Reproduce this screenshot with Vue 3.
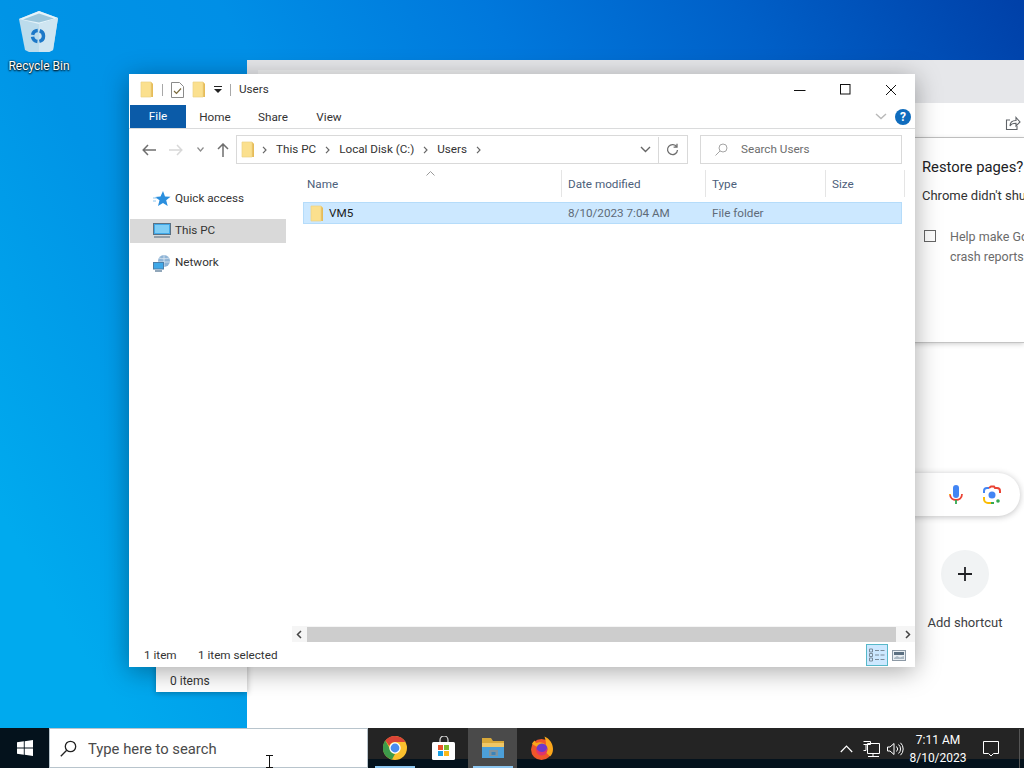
<script setup>
const navItems = [
  { label: "Quick access", icon: "star" },
  { label: "This PC", icon: "pc", active: true },
  { label: "Network", icon: "net" },
];
const crumbs = ["This PC", "Local Disk (C:)", "Users"];
const columns = [
  { label: "Name", width: 259 },
  { label: "Date modified", width: 144 },
  { label: "Type", width: 120 },
  { label: "Size", width: 79 },
];
</script>

<template>
  <main class="desktop">
    <svg class="defs" width="0" height="0">
      <symbol id="folder" viewBox="0 0 14 17">
        <path d="M1 1h10l2 2v13H1z" fill="#fbe08e" />
        <path d="M11 1l2 2v13h-2z" fill="#e6bc58" />
        <path d="M1 1h10v15H1z" fill="none" stroke="#ecd184" stroke-width=".7" />
      </symbol>
    </svg>

    <div class="recycle">
      <svg width="42" height="44" viewBox="0 0 42 44">
        <path d="M1 10L21 2l19 7-5 32-4 2H11l-4-2z" fill="#bcdcec" />
        <path d="M1 10L21 2l19 7-19 6z" fill="#e4f3fa" />
        <path d="M5 10.500l16-6 15 5-15 4z" fill="#9cc6db" />
        <path d="M21 43V15l19-6-5 32-4 2z" fill="#cfe5f1" />
        <circle cx="20" cy="27" r="5.500" fill="none" stroke="#1c78c8" stroke-width="3.500" stroke-dasharray="7 2" />
      </svg>
      <span>Recycle Bin</span>
    </div>

    <!-- chrome window behind -->
    <section class="chrome">
      <div class="chrome-tabs"><div class="chrome-tab"></div></div>
      <div class="chrome-bar">
        <svg width="16" height="16" viewBox="0 0 16 16" fill="none" stroke="#5f6368" stroke-width="1.1">
          <path d="M5 5H1.500v9.500H12V11" />
          <path d="M5 11c0-4 3-5.500 6-5.500V2.500l4 4.500-4 4V8.200c-3 0-5 .8-6 2.800z" />
        </svg>
      </div>
      <div class="restore">
        <h2>Restore pages?</h2>
        <p class="restore-sub">Chrome didn't shut down correctly.</p>
        <div class="restore-check">
          <span class="box"></span>
          <p>Help make Google Chrome better by sending<br />crash reports and usage statistics</p>
        </div>
      </div>
      <div class="ntp">
        <div class="pill">
          <svg width="16" height="22" viewBox="0 0 16 22">
            <rect x="5" y="1" width="6" height="13" rx="3" fill="#4285f4" />
            <path d="M2 10c0 4 3 6 6 6s6-2 6-6" fill="none" stroke="#ea4335" stroke-width="1.800" />
            <path d="M8 16v4" stroke="#34a853" stroke-width="1.800" />
            <path d="M2 10v1" stroke="#fbbc04" stroke-width="1.800" />
          </svg>
          <svg width="20" height="20" viewBox="0 0 20 20" fill="none" stroke-width="2">
            <path d="M2 8V6a3 3 0 0 1 3-3h2" stroke="#4285f4" />
            <path d="M7 3l2-1.500h3L13 3h2a3 3 0 0 1 3 3v2" stroke="#ea4335" />
            <path d="M2 12v2a4 4 0 0 0 4 4h3" stroke="#fbbc04" />
            <path d="M9 18h3" stroke="#34a853" />
            <circle cx="10" cy="10" r="3.500" fill="#4285f4" stroke="none" />
            <circle cx="16" cy="16" r="1.800" fill="#34a853" stroke="none" />
          </svg>
        </div>
        <div class="shortcut">
          <div class="plus">
            <svg width="14" height="14" viewBox="0 0 14 14"><path d="M7 0v14M0 7h14" stroke="#202124" stroke-width="1.800" /></svg>
          </div>
          <span>Add shortcut</span>
        </div>
      </div>
    </section>

    <!-- sliver of another explorer window -->
    <div class="back-explorer"><span>0 items</span></div>

    <section class="explorer">
      <header class="titlebar">
        <div class="qat">
          <svg class="fold" width="14" height="17"><use href="#folder" /></svg>
          <i class="vsep"></i>
          <svg width="13" height="16" viewBox="0 0 13 16" fill="none">
            <path d="M.5.500h8l4 4v11H.5z" fill="#fff" stroke="#8a8a8a" />
            <path d="M3 9l2.500 2.500L10 6.500" stroke="#7b6a3c" stroke-width="1.200" />
          </svg>
          <svg class="fold" width="14" height="17"><use href="#folder" /></svg>
          <svg width="8" height="7" viewBox="0 0 8 7"><path d="M0 0h8v1H0z M0 3h8L4 7z" fill="#222" /></svg>
          <i class="vsep"></i>
          <span class="win-title">Users</span>
        </div>
        <div class="win-btns">
          <svg width="12" height="12" viewBox="0 0 12 12"><path d="M0 6.500h11.500" stroke="#111" /></svg>
          <svg width="12" height="12" viewBox="0 0 12 12"><rect x=".5" y=".5" width="9.500" height="9.500" fill="none" stroke="#111" /></svg>
          <svg class="win-close" width="12" height="12" viewBox="0 0 12 12"><path d="M1 1l10 10M11 1L1 11" stroke="#111" /></svg>
        </div>
      </header>

      <nav class="ribbon">
        <a class="file-tab">File</a>
        <a>Home</a>
        <a>Share</a>
        <a>View</a>
        <div class="ribbon-right">
          <svg width="12" height="7" viewBox="0 0 12 7" fill="none"><path d="M1 1l5 4.500L11 1" stroke="#b9b9b9" stroke-width="1.400" /></svg>
          <span class="help">?</span>
        </div>
      </nav>

      <div class="addr-row">
        <div class="arrows">
          <svg width="14" height="12" viewBox="0 0 14 12" fill="none"><path d="M6 1L1.200 6 6 11M1.500 6H14" stroke="#6f6f6f" stroke-width="1.500" /></svg>
          <svg width="14" height="12" viewBox="0 0 14 12" fill="none"><path d="M8 1l4.800 5L8 11M12.500 6H0" stroke="#d8d8d8" stroke-width="1.500" /></svg>
          <svg width="7" height="5" viewBox="0 0 7 5" fill="none"><path d="M.5.500L3.500 4l3-3.500" stroke="#8c8c8c" stroke-width="1.200" /></svg>
          <svg width="12" height="14" viewBox="0 0 12 14" fill="none"><path d="M1 6l5-5 5 5M6 1.500V14" stroke="#6f6f6f" stroke-width="1.500" /></svg>
        </div>
        <div class="addr">
          <svg class="fold addr-fold" width="14" height="17"><use href="#folder" /></svg>
          <template v-for="c in crumbs" :key="c">
            <svg width="5" height="8" viewBox="0 0 5 8" fill="none"><path d="M1 .8L4 4 1 7.200" stroke="#666" stroke-width="1.200" /></svg>
            <span class="crumb">{{ c }}</span>
          </template>
          <svg width="5" height="8" viewBox="0 0 5 8" fill="none"><path d="M1 .8L4 4 1 7.200" stroke="#666" stroke-width="1.200" /></svg>
          <div class="addr-end">
            <svg width="11" height="7" viewBox="0 0 11 7" fill="none"><path d="M1 1l4.500 4.500L10 1" stroke="#666" stroke-width="1.400" /></svg>
            <i class="vsep tall"></i>
            <svg width="13" height="13" viewBox="0 0 13 13" fill="none"><path d="M10.800 4A5 5 0 1 0 11.500 7M11 .8V4.200H7.600" stroke="#6e6e6e" stroke-width="1.300" /></svg>
          </div>
        </div>
        <div class="search">
          <svg width="13" height="13" viewBox="0 0 13 13" fill="none"><circle cx="8" cy="5" r="4" stroke="#a5a5a5" /><path d="M5 8l-4.500 4.500" stroke="#a5a5a5" /></svg>
          <span class="crumb">Search Users</span>
        </div>
      </div>

      <div class="body">
        <aside class="nav">
          <div v-for="n in navItems" :key="n.label" class="nav-row" :class="{ active: n.active }">
            <svg v-if="n.icon === 'star'" width="18" height="18" viewBox="0 0 18 18">
              <path d="M10 1l2 5.500 5.500.3-4.300 3.500 1.500 5.700L10 13l-5 3 1.500-5.700L2 7l5.500-.5z" fill="#2b8fde" />
              <path d="M0 8h4M0 11h3" stroke="#8fc6ef" />
            </svg>
            <svg v-else-if="n.icon === 'pc'" width="18" height="16" viewBox="0 0 18 16">
              <rect x=".5" y=".5" width="17" height="11" fill="#3fa8e8" stroke="#5c7183" />
              <rect x="2" y="2" width="14" height="8" fill="#7fcdf5" />
              <path d="M1 14h16" stroke="#7b8b98" stroke-width="1.500" />
            </svg>
            <svg v-else width="18" height="18" viewBox="0 0 18 18">
              <circle cx="11" cy="7" r="6" fill="#8fb4d6" />
              <path d="M6 4c3 1 7 1 10 0M5 8h12M11 1v12" stroke="#e8f1f8" stroke-width=".7" fill="none" />
              <rect x=".5" y="8.500" width="10" height="6.500" fill="#3fa8e8" stroke="#4c7ea8" />
              <path d="M2 17h7" stroke="#6d8aa3" stroke-width="1.500" />
            </svg>
            <span class="crumb">{{ n.label }}</span>
          </div>
        </aside>

        <div class="files">
          <div class="list-head">
            <svg class="sort" width="9" height="5" viewBox="0 0 9 5" fill="none"><path d="M.5 4.500l4-4 4 4" stroke="#9a9a9a" /></svg>
            <div v-for="col in columns" :key="col.label" class="col" :style="{ width: col.width + 'px' }">{{ col.label }}</div>
          </div>
          <div class="row">
            <div class="cell-name">
              <svg class="fold" width="14" height="17"><use href="#folder" /></svg>
              <span>VM5</span>
            </div>
            <div class="cell-date">8/10/2023 7:04 AM</div>
            <div class="cell-type">File folder</div>
          </div>
          <div class="hscroll">
            <svg width="6" height="9" viewBox="0 0 6 9" fill="none"><path d="M5 1L1.500 4.500 5 8" stroke="#444" stroke-width="1.500" /></svg>
            <div class="thumb"></div>
            <svg width="6" height="9" viewBox="0 0 6 9" fill="none"><path d="M1 1l3.500 3.500L1 8" stroke="#444" stroke-width="1.500" /></svg>
          </div>
        </div>
      </div>

      <footer class="status">
        <span class="count">1 item</span>
        <span>1 item selected</span>
        <div class="views">
          <div class="view-btn on">
            <svg width="16" height="14" viewBox="0 0 16 14" fill="none" stroke="#7a8a99">
              <path d="M.5 1h3v3h-3zM.5 5.500h3v3h-3zM.5 10h3v3h-3zM6 2.500h4M11.500 2.500h4M6 7h4M11.500 7h4M6 11.500h4M11.500 11.500h4" />
            </svg>
          </div>
          <div class="view-btn">
            <svg width="14" height="11" viewBox="0 0 14 11">
              <rect x=".5" y=".5" width="13" height="10" fill="#e9eef2" stroke="#8c99a5" />
              <rect x="2" y="2" width="10" height="3" fill="#5b6f80" />
              <path d="M2 8l3-2 3 1.500L12 6v3H2z" fill="#aab8c3" />
            </svg>
          </div>
        </div>
      </footer>
    </section>

    <footer class="taskbar">
      <div class="start">
        <svg width="16" height="16" viewBox="0 0 16 16" fill="#fff">
          <path d="M0 2.300l6.800-1V7.500H0zM7.700 1.200L16 0v7.500H7.700zM0 8.400h6.800v6.300L0 13.700zM7.700 8.400H16V16l-8.300-1.200z" />
        </svg>
      </div>
      <div class="task-search">
        <svg width="17" height="17" viewBox="0 0 17 17" fill="none" stroke="#222" stroke-width="1.300">
          <circle cx="10.500" cy="6.500" r="5.200" /><path d="M6.700 10.300L.8 16.200" />
        </svg>
        <span>Type here to search</span>
      </div>
      <div class="apps">
        <div class="app running">
          <svg width="24" height="24" viewBox="0 0 24 24">
            <circle cx="12" cy="12" r="12" fill="#fbc02d" />
            <path d="M12 0a12 12 0 0 1 10.400 6H12a6 6 0 0 0-5.700 4L2.300 4.600A12 12 0 0 1 12 0z" fill="#db4437" />
            <path d="M2.300 4.600L7.100 13a6 6 0 0 0 4.900 5l-3 5.600A12 12 0 0 1 2.300 4.600z" fill="#3d9b4a" />
            <circle cx="12" cy="12" r="5.700" fill="#fff" /><circle cx="12" cy="12" r="4.400" fill="#4a8cf0" />
          </svg>
        </div>
        <div class="app">
          <svg width="24" height="24" viewBox="0 1 24 24">
            <path d="M8 8V5a4 4 0 0 1 8 0v3" fill="none" stroke="#ddd" stroke-width="1.200" />
            <rect y="7" width="23" height="18" rx="1.500" fill="#fff" />
            <rect x="6" y="10" width="5" height="5" fill="#e8532b" /><rect x="12" y="10" width="5" height="5" fill="#7fba2a" />
            <rect x="6" y="16" width="5" height="5" fill="#19a1e6" /><rect x="12" y="16" width="5" height="5" fill="#fbb91a" />
          </svg>
        </div>
        <div class="app running active">
          <svg width="24" height="22" viewBox="0 0 24 22">
            <path d="M1 1h9l2 3h11v17H1z" fill="#d8a83a" />
            <path d="M1 6h22v15H1z" fill="#efc766" />
            <path d="M1 10h22v11H1z" fill="#4c9fd8" />
            <rect x="8" y="13" width="9" height="6" fill="#7f93a0" /><rect x="10.500" y="15" width="4" height="3" fill="#3c83b8" />
          </svg>
        </div>
        <div class="app">
          <svg width="24" height="24" viewBox="0 0 24 24">
            <circle cx="11.500" cy="13.500" r="10.500" fill="#f0562a" />
            <path d="M2 8c.5-1.500 1.500-2.500 3-3.500 0 1.500.5 2 1.500 2.500 3-1.500 7.500-.5 9.500 2.500 0-3.500-.5-6-1.500-9 5 2 8.500 7 8.500 12.500 0 3-1 5.500-3 7.500l-5-5z" fill="#fba61b" />
            <circle cx="12" cy="13" r="5.500" fill="#6e39c9" />
            <path d="M6.500 12c1 2.500 3 4 5.500 4s4-1.500 5-4c1 4-2 7.500-5.500 7.500S5.500 16 6.500 12z" fill="#e0356c" />
          </svg>
        </div>
      </div>
      <div class="tray">
        <svg class="t-chev" width="13" height="8" viewBox="0 0 13 8" fill="none"><path d="M.8 7L6.500 1.200 12.200 7" stroke="#fff" stroke-width="1.200" /></svg>
        <svg class="t-net" width="17" height="16" viewBox="0 0 17 16" fill="none" stroke="#fff">
          <path d="M4.500 2.500h12v10h-12zM.5.500h7v3h-7M3 3.500v6H.5M10 12.500v3M5 15.500h11" />
        </svg>
        <svg class="t-vol" width="17" height="14" viewBox="0 0 17 14" fill="none" stroke="#fff">
          <path d="M.5 5v4h2.500L7 12.500v-11L3 5zM9.500 4.500a3.500 3.500 0 0 1 0 5M11.500 2.500a6 6 0 0 1 0 9M13.500.8a8.500 8.500 0 0 1 0 12.400" />
        </svg>
        <div class="clock"><span>7:11 AM</span><span>8/10/2023</span></div>
        <svg class="notif" width="16" height="16" viewBox="0 0 16 16" fill="none" stroke="#fff"><path d="M.5.500h15v12h-5L8 15l-2.500-2.500h-5z" /></svg>
        <i class="show-desktop"></i>
      </div>
    </footer>

    <svg class="ibeam" width="7" height="13" viewBox="0 0 7 13" fill="none"><path d="M0 .5h7M3.500.5V12.500M0 12.500h7" stroke="#111" /></svg>
  </main>
</template>

<style scoped>
.desktop {
  position: relative;
  width: 1024px;
  height: 768px;
  overflow: hidden;
  font-family: Roboto, "Open Sans", sans-serif;
  font-size: 12px;
  color: #333;
  background: linear-gradient(60deg, #00aaee 10%, #0094e6 30%, #008fe6 45%, #0078dc 63%, #0060c8 80%, #0040a8 100%);
}

.defs {
  position: absolute;
}

.recycle {
  position: absolute;
  left: 0;
  top: 9px;
  width: 78px;
  display: flex;
  flex-direction: column;
  align-items: center;
  gap: 6px;
  color: #fff;
  text-shadow: 0 1px 2px #000, 0 0 2px #000;
}

.chrome {
  position: absolute;
  left: 247px;
  top: 60px;
  width: 777px;
  height: 668px;
  display: flex;
  flex-direction: column;
  background: #fff;
}

.chrome-tabs {
  height: 43px;
  box-sizing: border-box;
  background: #e6e7ea;
  padding: 10px 0 0 11px;
}

.chrome-tab {
  width: 232px;
  height: 33px;
  background: #f0f1f2;
}

.chrome-bar {
  height: 35px;
  box-sizing: border-box;
  display: flex;
  justify-content: flex-end;
  align-items: center;
  padding: 6px 3px 0 0;
  background: #fff;
  border-bottom: 1px solid #c9c9c9;
}

.restore {
  height: 205px;
  box-sizing: border-box;
  padding: 19px 0 0 675px;
  white-space: nowrap;
  border-bottom: 1px solid #c4c4c4;
  box-shadow: 0 1px 5px rgba(0, 0, 0, 0.2);
  overflow: hidden;
}

.restore h2 {
  margin: 0;
  font-size: 14.8px;
  font-weight: 400;
  line-height: 20px;
  color: #202124;
}

.restore-sub {
  margin: 11px 0 0;
  font-size: 13px;
  color: #333;
}

.restore-check {
  display: flex;
  gap: 14px;
  margin-top: 24px;
  margin-left: 2px;
}

.restore-check p {
  margin: 0;
  font-size: 12.5px;
  line-height: 20px;
  color: #6b6b6b;
}

.box {
  flex: none;
  width: 10px;
  height: 10px;
  margin-top: 3px;
  border: 1px solid #666;
}

.ntp {
  flex: 1;
  display: flex;
  flex-direction: column;
  align-items: flex-end;
  padding-top: 130px;
}

.pill {
  width: 200px;
  height: 43px;
  box-sizing: border-box;
  margin-right: 4px;
  padding-right: 18px;
  display: flex;
  justify-content: flex-end;
  align-items: center;
  gap: 18px;
  background: #fff;
  border-radius: 0 22px 22px 0;
  box-shadow: 0 1px 6px rgba(32, 33, 36, 0.28);
}

.shortcut {
  width: 118px;
  margin-top: 34px;
  display: flex;
  flex-direction: column;
  align-items: center;
  gap: 17px;
  font-size: 13px;
  color: #3c4043;
}

.plus {
  width: 48px;
  height: 48px;
  border-radius: 50%;
  background: #f1f3f4;
  display: flex;
  align-items: center;
  justify-content: center;
}

.back-explorer {
  position: absolute;
  left: 156px;
  top: 660px;
  width: 91px;
  height: 32px;
  box-sizing: border-box;
  padding: 14px 0 0 14px;
  background: #fff;
  box-shadow: 0 1px 6px rgba(0, 0, 0, 0.3);
}

.explorer {
  position: absolute;
  left: 129px;
  top: 74px;
  width: 786px;
  height: 593px;
  display: flex;
  flex-direction: column;
  font-size: 11.7px;
  background: #fff;
  box-shadow: 0 4px 24px rgba(0, 0, 0, 0.35);
}

.titlebar {
  height: 31px;
  flex: none;
  display: flex;
  justify-content: space-between;
  align-items: center;
  padding: 0 18px 0 11px;
}

.qat {
  display: flex;
  align-items: center;
  gap: 8px;
}

.win-title {
  margin-bottom: 2px;
}

.vsep {
  width: 1px;
  height: 12px;
  background: #a8a8a8;
}

.vsep.tall {
  height: 26px;
  background: #d9d9d9;
}

.win-btns {
  display: flex;
  gap: 34px;
}

.win-close {
  margin-left: -1px;
}

.ribbon {
  height: 23px;
  flex: none;
  display: flex;
  align-items: center;
  padding-right: 4px;
  border-bottom: 1px solid #dadbdc;
}

.ribbon a {
  width: 58px;
  text-align: center;
  color: #333;
}

.ribbon a:last-of-type {
  width: 54px;
}

.ribbon .file-tab {
  width: 56px;
  height: 23px;
  line-height: 23px;
  margin-left: 1px;
  background: #0b5ba8;
  color: #fff;
}

.ribbon-right {
  margin-left: auto;
  display: flex;
  align-items: center;
  gap: 8px;
}

.help {
  width: 16px;
  height: 16px;
  border-radius: 50%;
  background: #0f6cbd;
  color: #fff;
  font-weight: 700;
  font-size: 12px;
  line-height: 16px;
  text-align: center;
}

.addr-row {
  height: 41px;
  flex: none;
  display: flex;
  align-items: center;
  padding-left: 13px;
}

.arrows {
  width: 94px;
  display: flex;
  align-items: center;
  justify-content: space-between;
  padding-right: 7px;
  box-sizing: border-box;
}

.addr {
  width: 452px;
  height: 29px;
  box-sizing: border-box;
  display: flex;
  align-items: center;
  gap: 9px;
  padding-left: 4px;
  border: 1px solid #d9d9d9;
}

.crumb {
  margin-bottom: 2px;
}

.addr-fold {
  margin-right: -2px;
}

.addr-end {
  margin-left: auto;
  display: flex;
  align-items: center;
  gap: 7px;
  padding-right: 8px;
}

.search {
  width: 202px;
  height: 29px;
  box-sizing: border-box;
  margin-left: 12px;
  display: flex;
  align-items: center;
  gap: 13px;
  padding-left: 14px;
  border: 1px solid #d9d9d9;
  color: #6d6d6d;
}

.body {
  flex: 1;
  min-height: 0;
  display: flex;
}

.nav {
  width: 161px;
  flex: none;
  padding-top: 17px;
  display: flex;
  flex-direction: column;
  gap: 8px;
}

.nav-row {
  width: 156px;
  height: 24px;
  margin-left: 1px;
  display: flex;
  align-items: center;
  gap: 4px;
  padding-left: 23px;
  box-sizing: border-box;
}

.nav-row.active {
  background: #d9d9d9;
}

.files {
  flex: 1;
  min-width: 0;
  position: relative;
  display: flex;
  flex-direction: column;
  padding-left: 13px;
}

.list-head {
  height: 27px;
  display: flex;
  color: #4c607a;
}

.sort {
  position: absolute;
  left: 136px;
  top: 1px;
}

.col {
  box-sizing: border-box;
  padding: 7px 0 0 6px;
  border-right: 1px solid #e5e5e5;
  flex: none;
}

.col:first-of-type {
  padding-left: 4px;
}

.row {
  width: 599px;
  height: 22px;
  margin-top: 5px;
  box-sizing: border-box;
  display: flex;
  align-items: center;
  background: #cce8ff;
  border: 1px solid #b5dcfa;
}

.cell-name {
  width: 264px;
  display: flex;
  align-items: center;
  gap: 5px;
  padding-left: 6px;
  box-sizing: border-box;
  color: #1a1a1a;
}

.cell-date {
  width: 144px;
  color: #5f6b78;
}

.cell-type {
  color: #5f6b78;
}

.hscroll {
  margin-top: auto;
  margin-bottom: 1px;
  margin-left: -11px;
  height: 16px;
  display: flex;
  align-items: center;
  gap: 5px;
  padding: 0 4px;
  background: #f5f5f5;
}

.thumb {
  flex: 1;
  height: 15px;
  margin-right: 4px;
  background: #cdcdcd;
}

.status {
  height: 24px;
  flex: none;
  box-sizing: border-box;
  display: flex;
  align-items: center;
  padding: 0 5px 0 15px;
}

.count {
  width: 54px;
}

.views {
  margin-left: auto;
  display: flex;
  align-items: center;
}

.view-btn {
  width: 22px;
  height: 22px;
  display: flex;
  align-items: center;
  justify-content: center;
  box-sizing: border-box;
}

.view-btn.on {
  background: #cce8ff;
  border: 1px solid #57b8c9;
}

.taskbar {
  position: absolute;
  left: 0;
  right: 0;
  bottom: 0;
  height: 40px;
  display: flex;
  background: linear-gradient(180deg, #242424 0, #242424 78%, #04121c 78%);
}

.start {
  width: 49px;
  display: flex;
  align-items: center;
  justify-content: center;
  background: #04121c;
}

.task-search {
  width: 319px;
  box-sizing: border-box;
  display: flex;
  align-items: center;
  gap: 11px;
  padding: 1px 0 0 10px;
  background: #fff;
  border: 1px solid #b8c4cc;
  font-size: 14.8px;
  color: #4a4a4a;
}

.apps {
  display: flex;
  margin-left: 2px;
}

.app {
  position: relative;
  width: 49px;
  display: flex;
  align-items: center;
  justify-content: center;
}

.app.running::after {
  content: "";
  position: absolute;
  left: 5px;
  right: 4px;
  bottom: 0;
  height: 2px;
  background: #8cc6f0;
}

.app.active {
  background: #4a4a4a;
}

.tray {
  margin-left: auto;
  display: flex;
  align-items: center;
  color: #fff;
  padding-top: 1px;
}

.t-net {
  margin-left: 10px;
}

.t-vol {
  margin-left: 7px;
}

.clock {
  width: 60px;
  margin-left: 4px;
  display: flex;
  flex-direction: column;
  align-items: center;
  line-height: 18px;
}

.notif {
  margin: 0 20px 0 15px;
}

.show-desktop {
  width: 1px;
  align-self: stretch;
  background: #555;
  margin-right: 4px;
}

.ibeam {
  position: absolute;
  left: 266px;
  top: 755px;
}
</style>

<style>
html,
body {
  margin: 0;
  overflow: hidden;
}
</style>
